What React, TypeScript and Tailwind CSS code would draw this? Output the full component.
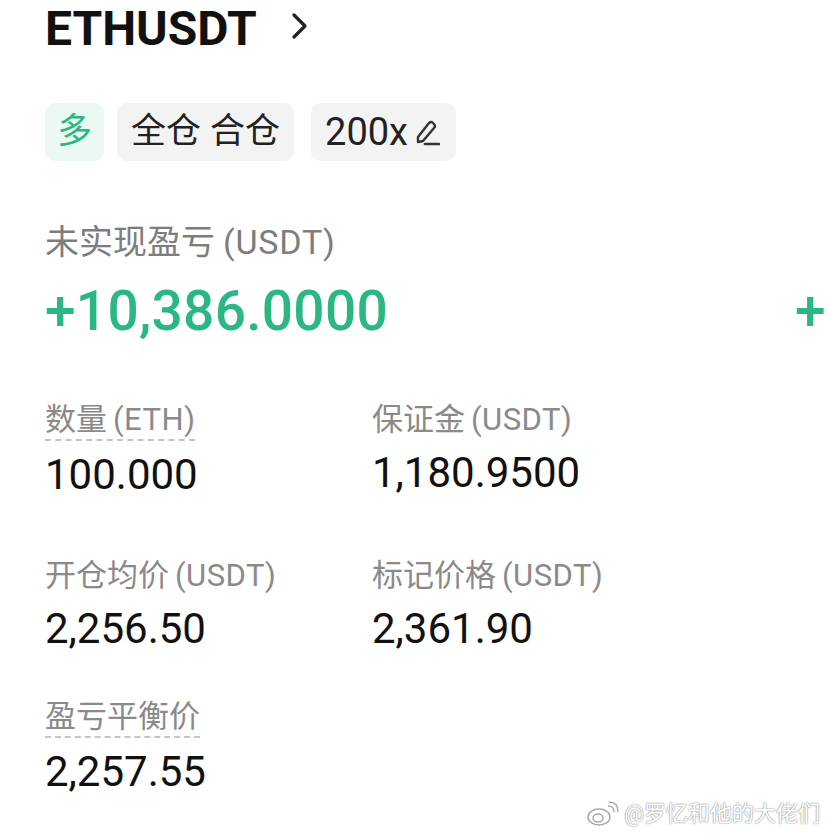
import React from 'react';

const SANS = "font-['Roboto','Noto_Sans_CJK_SC',sans-serif]";

interface Cell {
  label: string;
  unit?: string;
  value: string;
  dashed?: boolean;
}

const cells: Cell[] = [
  { label: '数量', unit: '(ETH)', value: '100.000', dashed: true },
  { label: '保证金', unit: '(USDT)', value: '1,180.9500' },
  { label: '开仓均价', unit: '(USDT)', value: '2,256.50' },
  { label: '标记价格', unit: '(USDT)', value: '2,361.90' },
];

function Label({ cell }: { cell: Cell }) {
  return (
    <div className="flex">
      <span
        className={`text-[31px] leading-[38px] text-[#8a8a8a] ${
          cell.dashed ? 'border-b-2 border-dashed border-[#c4c4c4]' : ''
        }`}
      >
        {cell.label}
        {cell.unit && <span className="ml-[6px] tracking-[0.5px]">{cell.unit}</span>}
      </span>
    </div>
  );
}

export default function App() {
  return (
    <div className={`relative w-[828px] h-[838px] overflow-hidden bg-white ${SANS}`}>
      <div className="pl-[45px] pt-[1px]">
        {/* 标题 */}
        <div className="flex items-center gap-[34px] h-[56px]">
          <span className="text-[48px] font-bold leading-none text-[#111]">ETHUSDT</span>
          <svg width="18" height="28" viewBox="0 0 18 28" className="mt-[-6px]">
            <path d="M3 3 L14 14 L3 25" fill="none" stroke="#222" strokeWidth="3.2" strokeLinecap="round" strokeLinejoin="round" />
          </svg>
        </div>

        {/* 标签 */}
        <div className="flex items-center mt-[46px]">
          <span className="h-[58px] px-[12px] flex items-center rounded-[10px] bg-[#ebf9f2] text-[35px] text-[#2bb784]">多</span>
          <span className="ml-[13px] h-[58px] px-[14px] flex items-center gap-[9px] rounded-[10px] bg-[#f3f3f3] text-[35px] text-[#222]">
            <span>全仓</span>
            <span>合仓</span>
          </span>
          <span className="ml-[17px] h-[58px] pl-[14px] pr-[16px] flex items-center gap-[6px] rounded-[10px] bg-[#f3f3f3] text-[38px] text-[#222]">
            <span>200x</span>
            <svg width="26" height="30" viewBox="0 0 26 30">
              <path d="M4 20 L15 6 Q17 4 19 6 L20 7 Q22 9 20 11 L9 24 L4 25 Z" fill="none" stroke="#333" strokeWidth="2.4" strokeLinejoin="round" />
              <path d="M11 27 H25" stroke="#333" strokeWidth="2.6" strokeLinecap="round" />
            </svg>
          </span>
        </div>

        {/* 未实现盈亏 */}
        <div className="mt-[60px] text-[34px] leading-[42px] text-[#7d7d7d]">
          未实现盈亏<span className="ml-[8px] tracking-[0.8px]">(USDT)</span>
        </div>
        <div className="flex gap-[407px] mt-[18px] whitespace-nowrap">
          <span className="text-[55px] leading-[60px] font-medium text-[#2bb784] tracking-[0.3px]">+10,386.0000</span>
          <span className="text-[55px] leading-[60px] font-medium text-[#2bb784]">+9,650.0000</span>
        </div>

        {/* 数据 */}
        <div className="grid grid-cols-[327px_327px] gap-y-[60px] mt-[60px]">
          {cells.map((c) => (
            <div key={c.label} className="flex flex-col gap-[12px]">
              <Label cell={c} />
              <span className="text-[42px] leading-[44px] text-[#111]">{c.value}</span>
            </div>
          ))}
        </div>
        <div className="flex flex-col gap-[12px] mt-[47px]">
          <Label cell={{ label: '盈亏平衡价', value: '2,257.55', dashed: true }} />
          <span className="text-[42px] leading-[44px] text-[#111]">2,257.55</span>
        </div>
      </div>

      {/* 水印 */}
      <div className="absolute right-[8px] bottom-[8px] flex items-center gap-[4px] text-[22px] text-white [text-shadow:0_0_2px_#999,0_0_1px_#888]">
        <svg width="34" height="28" viewBox="0 0 34 28">
          <ellipse cx="13" cy="17" rx="11" ry="8" fill="white" stroke="#aaa" strokeWidth="1.5" />
          <ellipse cx="12" cy="18" rx="5" ry="4" fill="white" stroke="#aaa" strokeWidth="1.5" />
          <path d="M22 6 Q28 6 28 12" fill="none" stroke="#aaa" strokeWidth="1.5" />
          <path d="M23 2 Q32 2 32 12" fill="none" stroke="#aaa" strokeWidth="1.5" />
        </svg>
        <span>@罗忆和他的大佬们</span>
      </div>
    </div>
  );
}
